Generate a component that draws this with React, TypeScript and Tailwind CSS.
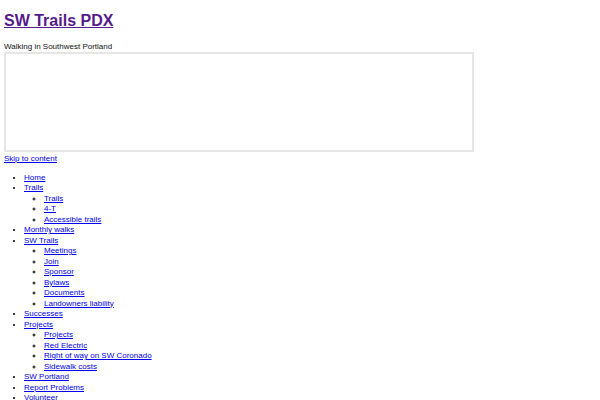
import React from "react";

const link = "text-[#0000ee] underline";

type Item = { label: string; children?: string[] };

const items: Item[] = [
  { label: "Home" },
  { label: "Trails", children: ["Trails", "4-T", "Accessible trails"] },
  { label: "Monthly walks" },
  {
    label: "SW Trails",
    children: ["Meetings", "Join", "Sponsor", "Bylaws", "Documents", "Landowners liability"],
  },
  { label: "Successes" },
  {
    label: "Projects",
    children: ["Projects", "Red Electric", "Right of way on SW Coronado", "Sidewalk costs"],
  },
  { label: "SW Portland" },
  { label: "Report Problems" },
  { label: "Volunteer" },
  { label: "Contact" },
];

export default function App() {
  return (
    <div
      className="h-[400px] overflow-hidden bg-white px-[4px] text-[8px] leading-[10.5px] text-[#111]"
      style={{ fontFamily: '"Liberation Sans", Arial, sans-serif' }}
    >
      <h1 className="mt-[12px] text-[16px] font-bold leading-[18px]">
        <a href="#" className="text-[#551a8b] underline">
          SW Trails PDX
        </a>
      </h1>
      <div className="mt-[11.5px]">Walking in Southwest Portland</div>
      <div className="h-[100px] w-[470px] border-2 border-[#e6e6e6]" />
      <div className="mt-[2px]">
        <a href="#" className={link}>
          Skip to content
        </a>
      </div>
      <ul className="mt-[8px] list-disc pl-[20px] marker:text-black">
        {items.map((it) => (
          <li key={it.label}>
            <a href="#" className={link}>
              {it.label}
            </a>
            {it.children && (
              <ul className="list-[circle] pl-[20px] marker:text-[#444]">
                {it.children.map((c) => (
                  <li key={c}>
                    <a href="#" className={link}>
                      {c}
                    </a>
                  </li>
                ))}
              </ul>
            )}
          </li>
        ))}
      </ul>
    </div>
  );
}
